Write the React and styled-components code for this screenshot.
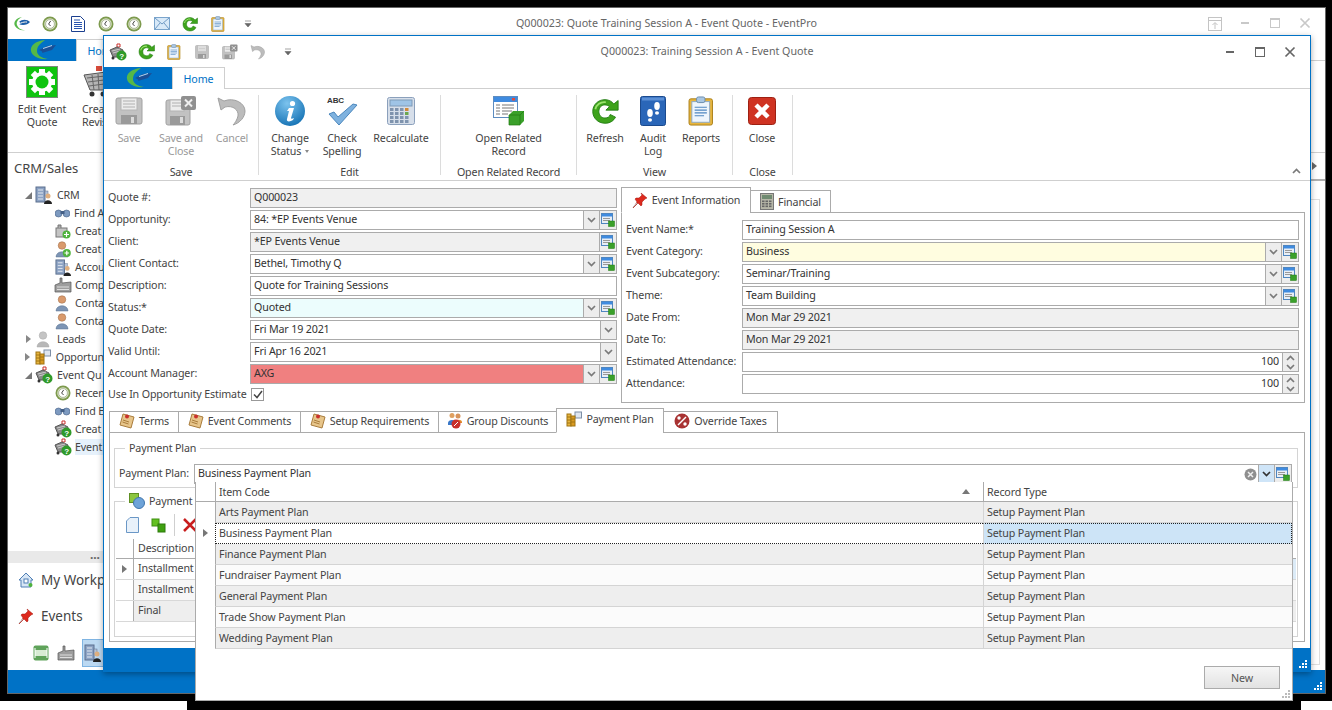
import React from "react";
import styled, { createGlobalStyle } from "styled-components";

const FONT = `"Noto Sans", "Open Sans", "Liberation Sans", sans-serif`;
const BLUE = "#0072c6";

const Global = createGlobalStyle`
  html, body { margin: 0; padding: 0; background: #fff; overflow: hidden; }
  body { font-family: ${FONT}; font-size: 10.7px; letter-spacing: -0.15px; color: #444; }
  * { box-sizing: border-box; }
`;

const Desktop = styled.div`
  position: relative;
  width: 1332px;
  height: 710px;
  overflow: hidden;
  background:
    linear-gradient(#000, #000) 0 0 / 100% 701px no-repeat,
    linear-gradient(#000, #000) 187px 701px / 1114px 9px no-repeat,
    #fff;
`;

const Ico = styled.svg`
  display: block;
  flex-shrink: 0;
`;

/* ---------- icons ---------- */
const Logo = () => (
  <Ico width="40" height="22" viewBox="0 0 40 22">
    <path d="M23 1C13 2 8 7 9 12c1 5 8 9 17 8-7-1-11-4-11-8 0-5 4-8 8-11z" fill="#55b848" />
    <path d="M17 11l8-4 9-1-4 5-10 3c1-1 0-2-3-3z" fill="#1a4f96" />
    <path d="M21 9.500l9-3" stroke="#b4d6f0" strokeWidth="1" />
  </Ico>
);
const SmallLogo = () => (
  <Ico width="18" height="16" viewBox="0 0 18 16">
    <path d="M9 1C3 2 0 6 2 10c2 3 6 5 10 4-4 0-7-2-8-5-1-3 1-6 5-8z" fill="#55b848" />
    <path d="M6 6c3-3 8-3 11 0-2 3-8 4-11 2 2 0 3-1 0-2z" fill="#1c5fa8" />
    <path d="M8 7c2-1 4-1 6-1" stroke="#fff" strokeWidth="1" />
  </Ico>
);
const Clock = ({ s = 16 }) => (
  <Ico width={s} height={s} viewBox="0 0 16 16">
    <circle cx="8" cy="8" r="7.5" fill="#7d9a4d" />
    <circle cx="8" cy="8" r="5.8" fill="#d6dfc3" />
    <circle cx="8" cy="8" r="4.4" fill="#fff" stroke="#8b9a72" strokeWidth=".6" />
    <path d="M8.6 5L6.6 8l2 2" fill="none" stroke="#444" strokeWidth="1" />
  </Ico>
);
const DocLines = () => (
  <Ico width="14" height="16" viewBox="0 0 14 16">
    <path d="M.5.5h9l4 4v11H.5z" fill="#fff" stroke="#1b3f8f" />
    <path d="M3 4h6M3 6.5h8M3 8.500h8M3 10.500h8M3 12.500h8" stroke="#2a55b0" />
  </Ico>
);
const Mail = () => (
  <Ico width="16" height="13" viewBox="0 0 16 13">
    <rect x=".5" y=".5" width="15" height="12" fill="#d8e9f8" stroke="#7aa4cc" />
    <path d="M1 1l7 6 7-6M1 12l5-6M15 12l-5-6" fill="none" stroke="#6f9ac4" />
  </Ico>
);
const Refresh = ({ s = 16 }) => (
  <Ico width={s} height={s} viewBox="0 0 32 32">
    <path
      d="M16 3C8 3 2 9 2 16.500S8 30 16 30c6 0 10-3 12-7l-6-3c-1 3-3 4-6 4-4 0-7-3-7-7.500S12 9 16 9c2 0 4 1 5 2l-4 4h14V4l-5 4c-2-3-6-5-10-5z"
      fill="#3ea31c"
      stroke="#1f7a10"
      strokeWidth="1"
    />
    <path d="M5 14C6 9 11 5 17 6" stroke="#9be36e" strokeWidth="2" fill="none" />
  </Ico>
);
const Clipboard = ({ s = 16 }) => (
  <Ico width={s * 0.85} height={s} viewBox="0 0 27 32">
    <rect x="1" y="3" width="25" height="28" rx="2" fill="#e7b53e" stroke="#a87d16" />
    <rect x="4" y="6" width="19" height="22" fill="#eef5fc" stroke="#8aa8c8" />
    <path d="M7 12h13M7 15h13M7 18h13M7 21h10" stroke="#4f86c0" strokeWidth="1.200" />
    <rect x="9" y="1" width="9" height="6" rx="2" fill="#a9c6e2" stroke="#6a8cad" />
  </Ico>
);
const Floppy = ({ s = 32 }) => (
  <Ico width={s} height={s} viewBox="0 0 32 32">
    <rect x="3" y="3" width="26" height="26" rx="2" fill="#c2c2c2" stroke="#a2a2a2" />
    <rect x="8" y="3" width="16" height="12" fill="#ececec" stroke="#b4b4b4" />
    <path d="M10 6h12M10 9h12M10 12h12" stroke="#b0b0b0" />
    <rect x="8" y="20" width="16" height="9" fill="#9a9a9a" />
    <rect x="18" y="22" width="3" height="6" fill="#dcdcdc" />
  </Ico>
);
const FloppyX = ({ s = 32 }) => (
  <Ico width={s} height={s} viewBox="0 0 32 32">
    <rect x="1" y="5" width="24" height="25" rx="2" fill="#c2c2c2" stroke="#a2a2a2" />
    <rect x="5" y="5" width="14" height="11" fill="#ececec" stroke="#b4b4b4" />
    <path d="M7 8h10M7 11h10" stroke="#b0b0b0" />
    <rect x="5" y="21" width="15" height="9" fill="#9a9a9a" />
    <rect x="15" y="22" width="3" height="6" fill="#dcdcdc" />
    <rect x="16" y="1" width="15" height="14" rx="2" fill="#909090" />
    <path d="M20 4.500l7 7M27 4.500l-7 7" stroke="#eee" strokeWidth="2" />
  </Ico>
);
const Undo = ({ s = 32 }) => (
  <Ico width={s} height={s} viewBox="0 0 32 32">
    <path
      d="M2 3l3 12 4-3c8-2 14 3 13 9-1 4-3 7-5 9 7-2 12-8 12-14C29 8 18 2 8 6z"
      fill="#bcbcbc"
      stroke="#a0a0a0"
    />
  </Ico>
);
const Info = () => (
  <Ico width="32" height="32" viewBox="0 0 32 32">
    <defs>
      <radialGradient id="ig" cx=".4" cy=".25" r=".85">
        <stop offset="0" stopColor="#7cc3ee" />
        <stop offset="1" stopColor="#0d6cb0" />
      </radialGradient>
    </defs>
    <circle cx="16" cy="16" r="15" fill="url(#ig)" />
    <circle cx="18.500" cy="8.500" r="2.600" fill="#fff" />
    <path d="M15 13h5l-3 10c0 1 1 1 3 0l-1 2c-3 2-7 2-6-1l2-8h-2z" fill="#fff" />
  </Ico>
);
const SpellText = styled.text`
  font: bold 8px "Liberation Sans", sans-serif;
  fill: #333;
`;
const Spell = () => (
  <Ico width="32" height="32" viewBox="0 0 32 32">
    <SpellText x="1" y="8">ABC</SpellText>
    <path d="M3 19l5-2 4 5L27 9l4 1-18 20z" fill="#7fb2df" stroke="#4b87bd" />
  </Ico>
);
const Calc = ({ s = 32 }) => (
  <Ico width={s} height={s} viewBox="0 0 28 28">
    <rect x=".5" y=".5" width="27" height="27" rx="2" fill="#d7dfea" stroke="#8ba0bc" />
    <rect x="3" y="3" width="22" height="6" fill="#9fc4e6" stroke="#7f9bb8" />
    {[11, 15, 19, 23].map((y) =>
      [3, 8, 13, 18].map((x) => (
        <rect key={x + "-" + y} x={x} y={y} width="3.500" height="3" fill={x === 18 ? (y === 11 ? "#d08a3c" : y === 15 ? "#6aa84f" : "#8095b0") : "#7f93ad"} />
      ))
    )}
  </Ico>
);
const GreyCalc = () => (
  <Ico width="14" height="17" viewBox="0 0 14 17">
    <rect x=".5" y=".5" width="13" height="16" fill="#b7b7a8" stroke="#777" />
    <rect x="2" y="2" width="10" height="4" fill="#6f8a70" />
    {[7.500, 10, 12.500].map((y) =>
      [2, 5.500, 9].map((x) => <rect key={x + "-" + y} x={x} y={y} width="2.500" height="1.600" fill="#666" />)
    )}
  </Ico>
);
const Related = () => (
  <Ico width="32" height="30" viewBox="0 0 32 30">
    <rect x=".5" y=".5" width="24" height="21" fill="#fff" stroke="#5d8cc0" />
    <rect x="1" y="1" width="23" height="5" fill="#3f8be0" />
    <rect x="19" y="2" width="3" height="2.500" fill="#e24a3b" />
    <path d="M3 9h4M9 9h12M3 12h4M9 12h12M3 15h4M9 15h10M3 18h4M9 18h6" stroke="#777" />
    <path d="M16 19l4-4h11v10l-4 4H16z" fill="#3aa02a" />
    <path d="M16 19h11v10H16zM27 19l4-4" fill="none" stroke="#1f7a10" strokeWidth=".7" />
  </Ico>
);
const Feet = () => (
  <Ico width="26" height="30" viewBox="0 0 26 30">
    <rect x=".5" y=".5" width="25" height="29" rx="2" fill="#2a66b8" stroke="#1b4a8e" />
    <rect x="2" y="1.500" width="22" height="3" fill="#5c90d6" />
    <ellipse cx="10" cy="17" rx="2.800" ry="4" fill="#fff" />
    <ellipse cx="10" cy="24" rx="2" ry="1.800" fill="#fff" />
    <ellipse cx="17" cy="10" rx="2.800" ry="4" fill="#fff" />
    <ellipse cx="17" cy="17" rx="2" ry="1.800" fill="#fff" />
  </Ico>
);
const RedClose = () => (
  <Ico width="28" height="28" viewBox="0 0 28 28">
    <rect x=".5" y=".5" width="27" height="27" rx="3" fill="#cf3322" stroke="#9d2012" />
    <path d="M8 8l12 12M20 8L8 20" stroke="#fff" strokeWidth="4.500" />
  </Ico>
);
const Pin = ({ s = 16 }) => (
  <Ico width={s} height={s} viewBox="0 0 16 16">
    <path d="M9 1l6 5-2 1-3 3 0 3-1 1-3-3-5 5 4-6-2-3 1-1 3 0 3-3z" fill="#dd2a1e" stroke="#a5140c" strokeWidth=".5" />
    <path d="M5 11l-4 4" stroke="#bbb" strokeWidth="1" />
  </Ico>
);
const Lookup = () => (
  <Ico width="14" height="14" viewBox="0 0 14 14">
    <rect x=".5" y=".5" width="11" height="10" fill="#e8eef6" stroke="#4f86c0" />
    <rect x="1" y="1" width="10" height="2.500" fill="#3f8be0" />
    <path d="M2 5.500h7M2 7.500h7" stroke="#999" />
    <rect x="7.500" y="8" width="6" height="5.500" fill="#3aa02a" stroke="#1f7a10" strokeWidth=".5" />
  </Ico>
);
const Note = () => (
  <Ico width="16" height="16" viewBox="0 0 16 16">
    <path d="M4 1l11 3-3 11-11-3z" fill="#e7c58a" stroke="#a97c3c" />
    <path d="M4 7l6 2M3.500 9l6 2" stroke="#a97c3c" />
    <circle cx="8" cy="3.500" r="2" fill="#c9302c" />
  </Ico>
);
const People = () => (
  <Ico width="16" height="17" viewBox="0 0 16 17">
    <circle cx="5" cy="3.500" r="2.500" fill="#e0a060" />
    <path d="M1 11c0-4 8-4 8 0v2H1z" fill="#3a78c8" />
    <circle cx="11" cy="4" r="2.500" fill="#d8935a" />
    <path d="M8 10c0-3 7-3 7 0v1H8z" fill="#e2892b" />
    <circle cx="9" cy="12" r="4.500" fill="#c9302c" />
    <path d="M7 14l4-4" stroke="#fff" />
  </Ico>
);
const Coins = ({ s = 16 }) => (
  <Ico width={s} height={s} viewBox="0 0 16 16">
    <rect x="9" y="1" width="6.500" height="6" fill="#dfe6ef" stroke="#7d8ea5" />
    <rect x="1" y="3" width="4" height="12" fill="#e7b53e" stroke="#a07512" />
    <rect x="5" y="5" width="4" height="10" fill="#d99a22" stroke="#a07512" />
    <path d="M1 6h4M1 9h4M1 12h4M5 8h4M5 11h4" stroke="#a07512" />
  </Ico>
);
const Percent = () => (
  <Ico width="16" height="16" viewBox="0 0 16 16">
    <circle cx="8" cy="8" r="7.500" fill="#a83232" />
    <path d="M4 12l8-8" stroke="#fff" strokeWidth="1.500" />
    <circle cx="5" cy="5" r="1.700" fill="#fff" />
    <circle cx="11" cy="11" r="1.700" fill="#fff" />
  </Ico>
);
const QuestionMark = styled.text`
  font: bold 8px "Liberation Sans", sans-serif;
  fill: #fff;
`;
const EventQuote = () => (
  <Ico width="18" height="18" viewBox="0 0 18 18">
    <path d="M8 1h3v3H8z" fill="none" stroke="#c9302c" />
    <path d="M1 7l7-3 6 3-2 7H4z" fill="#8a8a8a" stroke="#555" />
    <path d="M3 8l8-2M4 10l7-2" stroke="#ccc" />
    <circle cx="4" cy="15" r="1.500" fill="#333" />
    <circle cx="12.500" cy="12.500" r="5" fill="#2f9a2a" />
    <QuestionMark x="10.300" y="15.500">?</QuestionMark>
  </Ico>
);
const Cart = () => (
  <Ico width="34" height="34" viewBox="0 0 34 34">
    <path d="M2 10l22-3-2 18H8z" fill="#b5b5b5" stroke="#555" />
    <path d="M5 13l18-2M6 17l16-2M7 21l15-2M10 10l2 15M16 9l1 16" stroke="#666" />
    <circle cx="10" cy="29" r="2.500" fill="#333" />
    <circle cx="21" cy="29" r="2.500" fill="#333" />
    <rect x="14" y="1" width="6" height="5" fill="#d84a3a" />
  </Ico>
);
const GreenGear = () => (
  <Ico width="32" height="32" viewBox="0 0 32 32">
    <rect x=".5" y=".5" width="31" height="31" fill="#0fc40f" stroke="#7a8a7a" />
    {[0, 45, 90, 135].map((a) => (
      <rect key={a} x="13" y="3" width="6" height="26" fill="#fff" transform={`rotate(${a} 16 16)`} />
    ))}
    <circle cx="16" cy="16" r="10" fill="#fff" />
    <circle cx="16" cy="16" r="6.500" fill="#0fc40f" />
  </Ico>
);
const Binoculars = () => (
  <Ico width="15" height="10" viewBox="0 0 15 10">
    <circle cx="3.500" cy="5.500" r="3.500" fill="#7d9ac0" stroke="#445f85" strokeWidth=".6" />
    <circle cx="11.500" cy="5.500" r="3.500" fill="#7d9ac0" stroke="#445f85" strokeWidth=".6" />
    <rect x="5.500" y="3" width="4" height="3" fill="#445f85" />
  </Ico>
);
const Building = ({ s = 18 }) => (
  <Ico width={s} height={s} viewBox="0 0 18 18">
    <rect x="1" y="1" width="9" height="15" fill="#8da3c4" stroke="#5b6f8e" />
    <path d="M3 4h5M3 7h5M3 10h5M3 13h5" stroke="#e2e8f0" />
    <rect x="10" y="5" width="3" height="5" fill="#b4c2d8" stroke="#5b6f8e" strokeWidth=".5" />
    <circle cx="13" cy="10" r="2.500" fill="#e0b080" />
    <path d="M9 18c0-5 8-5 8 0z" fill="#222" />
  </Ico>
);
const CreateCompany = () => (
  <Ico width="16" height="16" viewBox="0 0 16 16">
    <rect x="1" y="5" width="11" height="9" fill="#c4c4c4" stroke="#777" />
    <path d="M3 5V2h3v3" fill="#aaa" stroke="#777" />
    <circle cx="11.500" cy="11.500" r="4" fill="#4fb33c" />
    <path d="M9 11.500h5M11.500 9v5" stroke="#fff" strokeWidth="1.200" />
  </Ico>
);
const Person = ({ plus, grey }) => (
  <Ico width="16" height="17" viewBox="0 0 16 17">
    <circle cx="7" cy="4.500" r="3.800" fill={grey ? "#c4c4c4" : "#d99a6c"} stroke={grey ? "#aaa" : "#9c6a44"} strokeWidth=".5" />
    <path d="M1 16c0-7 12-7 12 0z" fill={grey ? "#b8b8b8" : "#7d95b5"} stroke={grey ? "#aaa" : "#5a7291"} strokeWidth=".5" />
    {plus && <circle cx="11.800" cy="12" r="4" fill="#4fb33c" />}
    {plus && <path d="M9.500 12h4.600M11.800 9.700v4.600" stroke="#fff" strokeWidth="1.200" />}
  </Ico>
);
const Factory = () => (
  <Ico width="18" height="16" viewBox="0 0 18 16">
    <path d="M1 15V8l5-2V1h2v5l9-1v10z" fill="#9d9d9d" stroke="#555" strokeWidth=".7" />
    <path d="M3 10h12M3 12.500h12" stroke="#ddd" />
  </Ico>
);
const House = () => (
  <Ico width="16" height="16" viewBox="0 0 16 16">
    <path d="M8 1L1 8h2v7h10V8h2z" fill="#d8e6f5" stroke="#4f7fb5" />
    <rect x="6" y="7" width="4" height="4" fill="#fff" stroke="#4f7fb5" />
    <circle cx="12.500" cy="13" r="2" fill="#4fb33c" />
  </Ico>
);
const Bed = () => (
  <Ico width="16" height="16" viewBox="0 0 16 16">
    <rect x=".5" y=".5" width="15" height="15" rx="2" fill="#5fa35a" />
    <rect x="2" y="5" width="12" height="6" fill="#d8ecd4" />
    <path d="M2 3v10M14 3v10" stroke="#fff" />
  </Ico>
);
const PlanShapes = () => (
  <Ico width="16" height="16" viewBox="0 0 16 16">
    <rect x=".5" y=".5" width="9" height="9" fill="#8cc63f" stroke="#5f8f22" />
    <circle cx="10" cy="10" r="5.500" fill="#6ea3d8" stroke="#3f75ad" />
  </Ico>
);
const NewPage = () => (
  <Ico width="13" height="16" viewBox="0 0 13 16">
    <path d="M4 .5h8.500v15H.5V4z" fill="#e8f1fa" stroke="#6a97c6" />
  </Ico>
);
const GreenCubes = () => (
  <Ico width="15" height="15" viewBox="0 0 15 15">
    <rect x="1" y="1" width="7" height="7" fill="#63c020" stroke="#3f8f10" />
    <rect x="7" y="6" width="7" height="8" fill="#3fa010" stroke="#2d7a0a" />
  </Ico>
);
const RedX = () => (
  <Ico width="14" height="14" viewBox="0 0 14 14">
    <path d="M1 1l12 12M13 1L1 13" stroke="#c81e1e" strokeWidth="2.500" />
  </Ico>
);
const Chevron = ({ dark, up }) => (
  <Ico width="9" height="6" viewBox="0 0 9 6">
    <path d={up ? "M1 5l3.500-3.500L8 5" : "M1 1l3.500 3.500L8 1"} fill="none" stroke={dark ? "#333" : "#7a7a7a"} strokeWidth="1.700" />
  </Ico>
);
const Grip = () => (
  <Ico width="10" height="10" viewBox="0 0 10 10">
    <path d="M7 1h2v2H7zM4 4h2v2H4zM7 4h2v2H7zM1 7h2v2H1zM4 7h2v2H4zM7 7h2v2H7z" fill="#fff" />
  </Ico>
);
const GreyGrip = () => (
  <Ico width="10" height="10" viewBox="0 0 10 10">
    <path d="M7 1h2v2H7zM4 4h2v2H4zM7 4h2v2H7zM1 7h2v2H1zM4 7h2v2H4zM7 7h2v2H7z" fill="#bbb" />
  </Ico>
);
const ClearCircle = () => (
  <Ico width="13" height="13" viewBox="0 0 13 13">
    <circle cx="6.500" cy="6.500" r="6" fill="#8f8f8f" />
    <path d="M4 4l5 5M9 4l-5 5" stroke="#eee" strokeWidth="1.500" />
  </Ico>
);
const QatMore = () => (
  <Ico width="8" height="8" viewBox="0 0 8 8">
    <path d="M1 1h6M1 3.500h6l-3 3.500z" fill="#666" stroke="#666" strokeWidth=".6" />
  </Ico>
);
const MinIco = ({ c }) => (
  <Ico width="12" height="12" viewBox="0 0 12 12">
    <rect x="2" y="5" width="8" height="2" fill={c} />
  </Ico>
);
const MaxIco = ({ c }) => (
  <Ico width="12" height="12" viewBox="0 0 12 12">
    <rect x="1.500" y="1.500" width="9" height="9" fill="none" stroke={c} />
    <rect x="1" y="1" width="10" height="2" fill={c} />
  </Ico>
);
const CloseIco = ({ c }) => (
  <Ico width="12" height="12" viewBox="0 0 12 12">
    <path d="M1.500 1.500l9 9M10.500 1.500l-9 9" stroke={c} strokeWidth="1.700" />
  </Ico>
);
const RestoreIco = () => (
  <Ico width="14" height="14" viewBox="0 0 14 14">
    <rect x=".5" y=".5" width="13" height="13" fill="none" stroke="#c4c4c4" />
    <path d="M1 3.500h12M7 12V6M4.500 8L7 5.500 9.500 8" fill="none" stroke="#c4c4c4" />
  </Ico>
);
const Triangle = ({ c = "#666" }) => (
  <Ico width="5" height="8" viewBox="0 0 5 8">
    <path d="M0 0l5 4-5 4z" fill={c} />
  </Ico>
);
const OpenTriangle = () => (
  <Ico width="7" height="7" viewBox="0 0 7 7">
    <path d="M7 0v7H0z" fill="#777" />
  </Ico>
);

/* ---------- windows ---------- */
const MainWindow = styled.div`
  position: absolute;
  left: 7px;
  top: 7px;
  width: 1319px;
  height: 687px;
  display: flex;
  flex-direction: column;
  background: #fff;
  border: 1px solid #666;
`;

const DialogWindow = styled.div`
  position: absolute;
  left: 103px;
  top: 35px;
  width: 1208px;
  height: 637px;
  display: flex;
  flex-direction: column;
  background: #fff;
  border: 1px solid ${BLUE};
  box-shadow: 0 2px 6px rgba(0, 0, 0, 0.35);
`;

const TitleBar = styled.div`
  height: 31px;
  flex-shrink: 0;
  display: grid;
  grid-template-columns: 1fr auto 1fr;
  align-items: center;
`;

const Qat = styled.div`
  display: flex;
  align-items: center;
`;

const QatSlot = styled.div`
  width: 28px;
  display: flex;
  justify-content: center;
`;

const QatEnd = styled.div`
  margin-left: 12px;
`;

const Title = styled.div`
  margin-top: -2px;
  letter-spacing: 0;
  color: #666;
  white-space: nowrap;
`;

const WinControls = styled.div`
  display: flex;
  justify-content: flex-end;
  padding-right: 5px;
`;

const WinBtn = styled.div`
  width: 30px;
  display: flex;
  justify-content: center;
`;

const TabStrip = styled.div`
  height: 22px;
  flex-shrink: 0;
  display: flex;
  border-bottom: 1px solid #cfcfcf;
`;

const AppButton = styled.div`
  width: 68px;
  height: 22px;
  background: ${BLUE};
  display: flex;
  align-items: center;
  justify-content: center;
`;

const HomeTab = styled.div`
  width: 53px;
  height: 22px;
  background: #fff;
  border: 1px solid #cfcfcf;
  border-bottom: none;
  color: ${BLUE};
  display: flex;
  align-items: center;
  justify-content: center;
`;

const Ribbon = styled.div`
  height: 92px;
  flex-shrink: 0;
  display: flex;
  position: relative;
  border-bottom: 1px solid #cfcfcf;
`;

const RibbonGroup = styled.div`
  width: ${(p) => p.$w}px;
  margin-top: 6px;
  height: 80px;
  display: flex;
  flex-direction: column;
  border-right: 1px solid #dcdcdc;
`;

const GroupItems = styled.div`
  flex: 1;
  display: flex;
  padding-left: ${(p) => p.$pad || 0}px;
  padding-top: ${(p) => p.$top || 0}px;
`;

const GroupLabel = styled.div`
  height: 14px;
  margin-bottom: -4px;
  line-height: 14px;
  text-align: center;
  white-space: nowrap;
`;

const BigButton = styled.div`
  width: ${(p) => p.$w}px;
  display: flex;
  flex-direction: column;
  align-items: ${(p) => (p.$left ? "flex-start" : "center")};
  color: ${(p) => (p.$off ? "#9a9a9a" : "#444")};
`;

const BigIcon = styled.div`
  height: 32px;
  display: flex;
  align-items: center;
  justify-content: center;
`;

const BigLabel = styled.div`
  margin-top: 5px;
  line-height: 13px;
  text-align: ${(p) => (p.$left ? "left" : "center")};
  white-space: nowrap;
`;

const Collapse = styled.div`
  position: absolute;
  right: 9px;
  bottom: 6px;
`;

const DropMark = styled.span`
  display: inline-block;
  margin-left: 4px;
  vertical-align: 2px;
  border: 2px solid transparent;
  border-top: 3px solid #888;
  border-bottom: none;
`;

/* ---------- main window side ---------- */
const MainBody = styled.div`
  flex: 1;
  min-height: 0;
  display: flex;
`;

const Sidebar = styled.div`
  width: 96px;
  flex-shrink: 0;
  display: flex;
  flex-direction: column;
`;

const SidebarTitle = styled.div`
  padding: 5px 0 0 6px;
  height: 33px;
  font-size: 13px;
  letter-spacing: 0;
  line-height: 20px;
  color: #444;
`;

const Tree = styled.div`
  flex: 1;
`;

const TreeRow = styled.div`
  height: 18px;
  display: flex;
  align-items: center;
  gap: ${(p) => (p.$child ? 4 : 5)}px;
  padding-left: ${(p) => (p.$child ? 47 : 14)}px;
  white-space: nowrap;
`;

const TreeArrow = styled.div`
  width: 12px;
  margin-right: -3px;
  display: flex;
  justify-content: center;
`;

const TreeIcon = styled.div`
  width: 16px;
  display: flex;
  justify-content: center;
`;

const TreeLabel = styled.span`
  flex: 1;
  padding: 1px 0;
  background: ${(p) => (p.$active ? "#e6f1fb" : "transparent")};
`;

const Splitter = styled.div`
  height: 12px;
  flex-shrink: 0;
  background: #e9e9e9;
  padding-left: 82px;
  font-size: 12px;
  line-height: 7px;
  font-weight: bold;
  color: #666;
`;

const NavItem = styled.div`
  height: 36px;
  padding: 0 0 2px 10px;
  display: flex;
  align-items: center;
  gap: 7px;
  font-size: 13.500px;
  letter-spacing: 0;
  color: #444;
  white-space: nowrap;
`;

const NavIcons = styled.div`
  height: 35px;
  display: flex;
  align-items: center;
  padding-left: 20px;
`;

const NavIconBtn = styled.div`
  width: ${(p) => (p.$on ? 23 : 26)}px;
  height: 28px;
  margin-left: ${(p) => (p.$on ? 3 : 0)}px;
  display: flex;
  align-items: center;
  justify-content: center;
  background: ${(p) => (p.$on ? "#bcd9f2" : "transparent")};
  border: 1px solid ${(p) => (p.$on ? "#7fb4e2" : "transparent")};
`;

const ContentPane = styled.div`
  flex: 1;
  display: flex;
  flex-direction: column;
`;

const PaneHeader = styled.div`
  height: 28px;
  display: flex;
  align-items: center;
  justify-content: flex-end;
  padding-right: 8px;
  border-bottom: 2px solid #b0b0b0;
`;

const PaneFrame = styled.div`
  flex: 1;
  margin: 18px 5px 5px 0;
  border: 1px solid #dedede;
`;

const StatusBar = styled.div`
  height: 23px;
  margin-top: auto;
  flex-shrink: 0;
  background: ${BLUE};
  display: flex;
  justify-content: flex-end;
  align-items: flex-end;
  padding: 0 2px 2px 0;
`;

/* ---------- dialog form ---------- */
const FormArea = styled.div`
  height: 222px;
  flex-shrink: 0;
  display: flex;
  gap: 4px;
`;

const LeftForm = styled.div`
  width: 513px;
  padding: 7px 0 0 4px;
  display: flex;
  flex-direction: column;
  gap: 2px;
`;

const FormRow = styled.div`
  display: grid;
  grid-template-columns: ${(p) => p.$label}px 1fr;
  align-items: center;
  height: 20px;
  white-space: nowrap;
`;

const FormLabel = styled.span`
  margin-top: -2px;
`;

const Field = styled.div`
  height: 20px;
  display: flex;
  align-items: stretch;
  border: 1px solid #ababab;
  background: ${(p) => p.$bg || "#fff"};
  color: #333;
`;

const FieldText = styled.div`
  flex: 1;
  padding: 0 3px;
  line-height: 17px;
  text-align: ${(p) => (p.$right ? "right" : "left")};
  overflow: hidden;
  white-space: nowrap;
`;

const SideBtn = styled.div`
  width: ${(p) => p.$w || 16}px;
  background: ${(p) => (p.$on ? "#cfe5f8" : "#ededed")};
  border-left: 1px solid #ababab;
  display: flex;
  align-items: center;
  justify-content: center;
`;

const ClearSlot = styled.div`
  width: 16px;
  display: flex;
  align-items: center;
  justify-content: center;
`;

const Spinner = styled.div`
  width: 16px;
  border-left: 1px solid #ababab;
  background: #ededed;
  display: flex;
  flex-direction: column;
  align-items: center;
  justify-content: center;
  gap: 3px;
`;

const Check = styled.div`
  width: 13px;
  height: 13px;
  margin-left: 1px;
  border: 1px solid #999;
  background: #fff;
  display: flex;
  align-items: center;
  justify-content: center;
`;

const RightForm = styled.div`
  width: 684px;
  padding-top: 6px;
  display: flex;
  flex-direction: column;
`;

const TabRow = styled.div`
  display: flex;
  align-items: flex-end;
  height: 26px;
  margin-bottom: -1px;
  position: relative;
  z-index: 1;
`;

const Tab = styled.div`
  width: ${(p) => p.$w}px;
  height: ${(p) => (p.$on ? p.$h + 3 : p.$h)}px;
  padding-bottom: ${(p) => p.$pb || 0}px;
  display: flex;
  align-items: center;
  justify-content: center;
  gap: 4px;
  background: #fff;
  border: 1px solid #ababab;
  border-bottom: ${(p) => (p.$on ? "1px solid #fff" : "1px solid #ababab")};
  margin-left: -1px;
  white-space: nowrap;
  &:first-child { margin-left: 0; }
`;

const TabPanel = styled.div`
  flex: 1;
  border: 1px solid #ababab;
  padding: 7px 5px 0 4px;
  display: flex;
  flex-direction: column;
  gap: 2px;
`;

/* ---------- bottom tabs ---------- */
const BottomArea = styled.div`
  margin: 4px 5px 0 5px;
  height: 235px;
  flex-shrink: 0;
  display: flex;
  flex-direction: column;
`;

const BottomPanel = styled.div`
  flex: 1;
  border: 1px solid #ababab;
  padding: 7px 6px 0 4px;
  background: #fff;
`;

const Group = styled.fieldset`
  margin: 0 0 ${(p) => p.$mb || 0}px;
  padding: ${(p) => p.$pt}px 5px 5px 4px;
  min-width: 0;
  border: 1px solid #d4d4d4;
  height: ${(p) => p.$h}px;
`;

const Legend = styled.legend`
  margin-left: 6px;
  padding: 0 4px;
  height: 16px;
  line-height: 15px;
  display: flex;
  align-items: center;
  gap: 4px;
  color: #444;
`;

const Toolbar = styled.div`
  display: flex;
  align-items: center;
  height: 22px;
  margin-top: 3px;
`;

const ToolSlot = styled.div`
  width: 26px;
  display: flex;
  justify-content: center;
`;

const ToolSep = styled.div`
  width: 1px;
  height: 22px;
  margin: 0 8px 0 3px;
  background: #cfcfcf;
`;

const BackGrid = styled.div`
  margin: 3px -4px 0 -3px;
`;

const BackRow = styled.div`
  display: grid;
  grid-template-columns: 17px 1fr 12px;
  align-items: center;
  height: ${(p) => p.$h}px;
  border-bottom: 1px solid ${(p) => (p.$head ? "#ababab" : "#d8d8d8")};
  background: ${(p) => p.$bg || "transparent"};
`;

const BackIndicator = styled.div`
  height: 100%;
  display: flex;
  align-items: center;
  justify-content: center;
  background: #fff;
`;

const BackCell = styled.div`
  height: 100%;
  padding-left: 4px;
  line-height: 18px;
  border-left: 1px solid #ababab;
`;

const RowEnd = styled.div`
  height: 100%;
  display: flex;
  align-items: center;
  background: ${(p) => p.$bg || "transparent"};
`;

const RowDot = styled.div`
  width: 5px;
  height: 10px;
  border-radius: 50%;
  background: #5b62b0;
`;

/* ---------- lookup popup ---------- */
const Popup = styled.div`
  position: absolute;
  left: 195px;
  top: 482px;
  width: 1098px;
  height: 219px;
  display: flex;
  flex-direction: column;
  background: #fff;
  border: 1px solid #ababab;
  border-top: none;
`;

const PopupRow = styled.div`
  display: grid;
  grid-template-columns: 19px 768px 1fr;
  height: 21px;
  flex-shrink: 0;
  color: #444;
`;

const PopupHead = styled(PopupRow)`
  height: 20px;
`;

const Indicator = styled.div`
  display: flex;
  align-items: center;
  justify-content: center;
  border-bottom: 1px solid ${(p) => (p.$head ? "#ababab" : "transparent")};
`;

const PopupCell = styled.div`
  display: flex;
  align-items: center;
  justify-content: space-between;
  padding: 0 13px ${(p) => (p.$head ? 0 : 1)}px 3px;
  border-left: 1px ${(p) => (p.$focus === "left" ? "dotted #222" : p.$strong ? "solid #ababab" : "solid #d4d4d4")};
  border-right: ${(p) => (p.$focus === "right" ? "1px dotted #222" : "none")};
  border-bottom: 1px ${(p) => (p.$focus ? "dotted #222" : p.$head ? "solid #ababab" : "solid #d4d4d4")};
  border-top: ${(p) => (p.$focus ? "1px dotted #222" : "none")};
  background: ${(p) => p.$bg};
  white-space: nowrap;
`;

const SortUp = styled.span`
  width: 0;
  height: 0;
  border: 4px solid transparent;
  border-bottom: 5px solid #777;
  border-top: none;
`;

const PopupFooter = styled.div`
  flex: 1;
  display: flex;
  justify-content: flex-end;
  align-items: flex-end;
  padding: 0 12px 11px 0;
  position: relative;
`;

const NewButton = styled.button`
  width: 76px;
  height: 23px;
  padding: 0;
  font: inherit;
  letter-spacing: inherit;
  color: #555;
  background: linear-gradient(#f6f6f6, #e2e2e2);
  border: 1px solid #ababab;
`;

const CornerGrip = styled.div`
  position: absolute;
  right: 1px;
  bottom: 1px;
`;

const PAYMENT_PLANS = [
  "Arts Payment Plan",
  "Business Payment Plan",
  "Finance Payment Plan",
  "Fundraiser Payment Plan",
  "General Payment Plan",
  "Trade Show Payment Plan",
  "Wedding Payment Plan",
];

const treeRows = [
  { label: "CRM", arrow: "open", icon: <Building /> },
  { label: "Find A", child: true, icon: <Binoculars /> },
  { label: "Creat", child: true, icon: <CreateCompany /> },
  { label: "Creat", child: true, icon: <Person plus /> },
  { label: "Accou", child: true, icon: <Building s={17} /> },
  { label: "Comp", child: true, icon: <Factory /> },
  { label: "Conta", child: true, icon: <Person /> },
  { label: "Conta", child: true, icon: <Person /> },
  { label: "Leads", arrow: "closed", icon: <Person grey /> },
  { label: "Opportun", arrow: "closed", icon: <Coins /> },
  { label: "Event Qu", arrow: "open", icon: <EventQuote /> },
  { label: "Recen", child: true, icon: <Clock s={16} /> },
  { label: "Find E", child: true, icon: <Binoculars /> },
  { label: "Creat", child: true, icon: <EventQuote /> },
  { label: "Event", child: true, icon: <EventQuote />, active: true },
];

const Lk = () => (
  <SideBtn $w={17}>
    <Lookup />
  </SideBtn>
);
const Dd = () => (
  <SideBtn>
    <Chevron />
  </SideBtn>
);

const leftRows = [
  { label: "Quote #:", value: "Q000023", bg: "#f0f0f0" },
  { label: "Opportunity:", value: "84: *EP Events Venue", dd: true, lk: true },
  { label: "Client:", value: "*EP Events Venue", bg: "#f0f0f0", lk: true },
  { label: "Client Contact:", value: "Bethel, Timothy Q", dd: true, lk: true },
  { label: "Description:", value: "Quote for Training Sessions" },
  { label: "Status:*", value: "Quoted", bg: "#ecfdfd", dd: true, lk: true },
  { label: "Quote Date:", value: "Fri Mar 19 2021", dd: true },
  { label: "Valid Until:", value: "Fri Apr 16 2021", dd: true },
  { label: "Account Manager:", value: "AXG", bg: "#f08080", dd: true, lk: true },
];

const rightRows = [
  { label: "Event Name:*", value: "Training Session A" },
  { label: "Event Category:", value: "Business", bg: "#fffde0", dd: true, lk: true },
  { label: "Event Subcategory:", value: "Seminar/Training", dd: true, lk: true },
  { label: "Theme:", value: "Team Building", dd: true, lk: true },
  { label: "Date From:", value: "Mon Mar 29 2021", bg: "#f0f0f0" },
  { label: "Date To:", value: "Mon Mar 29 2021", bg: "#f0f0f0" },
  { label: "Estimated Attendance:", value: "100", spin: true },
  { label: "Attendance:", value: "100", spin: true },
];

const bottomTabs = [
  { label: "Terms", w: 70, icon: <Note /> },
  { label: "Event Comments", w: 123, icon: <Note /> },
  { label: "Setup Requirements", w: 139, icon: <Note /> },
  { label: "Group Discounts", w: 119, icon: <People /> },
  { label: "Payment Plan", w: 108, icon: <Coins />, on: true },
  { label: "Override Taxes", w: 115, icon: <Percent /> },
];

const FormField = ({ row, labelWidth }) => (
  <FormRow $label={labelWidth}>
    <FormLabel>{row.label}</FormLabel>
    <Field $bg={row.bg}>
      <FieldText $right={row.spin}>{row.value}</FieldText>
      {row.dd && <Dd />}
      {row.lk && <Lk />}
      {row.spin && (
        <Spinner>
          <Chevron up />
          <Chevron />
        </Spinner>
      )}
    </Field>
  </FormRow>
);

const App = () => {
  return (
    <Desktop>
      <Global />
      <MainWindow>
        <TitleBar>
          <Qat>
            <QatSlot><SmallLogo /></QatSlot>
            <QatSlot><Clock /></QatSlot>
            <QatSlot><DocLines /></QatSlot>
            <QatSlot><Clock /></QatSlot>
            <QatSlot><Clock /></QatSlot>
            <QatSlot><Mail /></QatSlot>
            <QatSlot><Refresh /></QatSlot>
            <QatSlot><Clipboard /></QatSlot>
            <QatEnd><QatMore /></QatEnd>
          </Qat>
          <Title>Q000023: Quote Training Session A - Event Quote - EventPro</Title>
          <WinControls>
            <WinBtn><RestoreIco /></WinBtn>
            <WinBtn><MinIco c="#c8c8c8" /></WinBtn>
            <WinBtn><MaxIco c="#c8c8c8" /></WinBtn>
            <WinBtn><CloseIco c="#c8c8c8" /></WinBtn>
          </WinControls>
        </TitleBar>
        <TabStrip>
          <AppButton><Logo /></AppButton>
          <HomeTab>Home</HomeTab>
        </TabStrip>
        <Ribbon>
          <GroupItems $top={5}>
            <BigButton $w={68}>
              <BigIcon><GreenGear /></BigIcon>
              <BigLabel>Edit Event<br />Quote</BigLabel>
            </BigButton>
            <GroupItems $pad={6}>
              <BigButton $w={36} $left>
                <BigIcon><Cart /></BigIcon>
                <BigLabel $left>Crea<br />Revis</BigLabel>
              </BigButton>
            </GroupItems>
          </GroupItems>
        </Ribbon>
        <MainBody>
          <Sidebar>
            <SidebarTitle>CRM/Sales</SidebarTitle>
            <Tree>
              {treeRows.map((row, i) => (
                <TreeRow key={i} $child={row.child}>
                  {!row.child && (
                    <TreeArrow>
                      {row.arrow === "open" ? <OpenTriangle /> : <Triangle c="#888" />}
                    </TreeArrow>
                  )}
                  <TreeIcon>{row.icon}</TreeIcon>
                  <TreeLabel $active={row.active}>{row.label}</TreeLabel>
                </TreeRow>
              ))}
            </Tree>
            <Splitter>...</Splitter>
            <NavItem><House />My Workp</NavItem>
            <NavItem><Pin />Events</NavItem>
            <NavIcons>
              <NavIconBtn><Bed /></NavIconBtn>
              <NavIconBtn><Factory /></NavIconBtn>
              <NavIconBtn $on><Building /></NavIconBtn>
            </NavIcons>
          </Sidebar>
          <ContentPane>
            <PaneHeader><Triangle /></PaneHeader>
            <PaneFrame />
          </ContentPane>
        </MainBody>
        <StatusBar><Grip /></StatusBar>
      </MainWindow>

      <DialogWindow>
        <TitleBar>
          <Qat>
            <QatSlot><EventQuote /></QatSlot>
            <QatSlot><Refresh s={17} /></QatSlot>
            <QatSlot><Clipboard /></QatSlot>
            <QatSlot><Floppy s={16} /></QatSlot>
            <QatSlot><FloppyX s={16} /></QatSlot>
            <QatSlot><Undo s={16} /></QatSlot>
            <QatEnd><QatMore /></QatEnd>
          </Qat>
          <Title>Q000023: Training Session A - Event Quote</Title>
          <WinControls>
            <WinBtn><MinIco c="#666" /></WinBtn>
            <WinBtn><MaxIco c="#666" /></WinBtn>
            <WinBtn><CloseIco c="#666" /></WinBtn>
          </WinControls>
        </TitleBar>
        <TabStrip>
          <AppButton><Logo /></AppButton>
          <HomeTab>Home</HomeTab>
        </TabStrip>
        <Ribbon>
          <RibbonGroup $w={155}>
            <GroupItems>
              <BigButton $w={50} $off>
                <BigIcon><Floppy /></BigIcon>
                <BigLabel>Save</BigLabel>
              </BigButton>
              <BigButton $w={54} $off>
                <BigIcon><FloppyX /></BigIcon>
                <BigLabel>Save and<br />Close</BigLabel>
              </BigButton>
              <BigButton $w={48} $off>
                <BigIcon><Undo /></BigIcon>
                <BigLabel>Cancel</BigLabel>
              </BigButton>
            </GroupItems>
            <GroupLabel>Save</GroupLabel>
          </RibbonGroup>
          <RibbonGroup $w={182}>
            <GroupItems $pad={2}>
              <BigButton $w={58}>
                <BigIcon><Info /></BigIcon>
                <BigLabel>Change<br />Status<DropMark /></BigLabel>
              </BigButton>
              <BigButton $w={46}>
                <BigIcon><Spell /></BigIcon>
                <BigLabel>Check<br />Spelling</BigLabel>
              </BigButton>
              <BigButton $w={72}>
                <BigIcon><Calc s={28} /></BigIcon>
                <BigLabel>Recalculate</BigLabel>
              </BigButton>
            </GroupItems>
            <GroupLabel>Edit</GroupLabel>
          </RibbonGroup>
          <RibbonGroup $w={136}>
            <GroupItems>
              <BigButton $w={135}>
                <BigIcon><Related /></BigIcon>
                <BigLabel>Open Related<br />Record</BigLabel>
              </BigButton>
            </GroupItems>
            <GroupLabel>Open Related Record</GroupLabel>
          </RibbonGroup>
          <RibbonGroup $w={156}>
            <GroupItems $pad={1}>
              <BigButton $w={54}>
                <BigIcon><Refresh s={28} /></BigIcon>
                <BigLabel>Refresh</BigLabel>
              </BigButton>
              <BigButton $w={42}>
                <BigIcon><Feet /></BigIcon>
                <BigLabel>Audit<br />Log</BigLabel>
              </BigButton>
              <BigButton $w={54}>
                <BigIcon><Clipboard s={30} /></BigIcon>
                <BigLabel>Reports</BigLabel>
              </BigButton>
            </GroupItems>
            <GroupLabel>View</GroupLabel>
          </RibbonGroup>
          <RibbonGroup $w={60}>
            <GroupItems>
              <BigButton $w={58}>
                <BigIcon><RedClose /></BigIcon>
                <BigLabel>Close</BigLabel>
              </BigButton>
            </GroupItems>
            <GroupLabel>Close</GroupLabel>
          </RibbonGroup>
          <Collapse><Chevron up /></Collapse>
        </Ribbon>

        <FormArea>
          <LeftForm>
            {leftRows.map((row) => (
              <FormField key={row.label} row={row} labelWidth={142} />
            ))}
            <FormRow $label={142}>
              <FormLabel>Use In Opportunity Estimate</FormLabel>
              <Check>
                <Ico width="10" height="9" viewBox="0 0 10 9">
                  <path d="M1 4.500l3 3 5-6.500" fill="none" stroke="#444" strokeWidth="1.500" />
                </Ico>
              </Check>
            </FormRow>
          </LeftForm>
          <RightForm>
            <TabRow>
              <Tab $w={130} $h={23} $on><Pin />Event Information</Tab>
              <Tab $w={81} $h={23}><GreyCalc />Financial</Tab>
            </TabRow>
            <TabPanel>
              {rightRows.map((row) => (
                <FormField key={row.label} row={row} labelWidth={116} />
              ))}
            </TabPanel>
          </RightForm>
        </FormArea>

        <BottomArea>
          <TabRow>
            {bottomTabs.map((tab) => (
              <Tab key={tab.label} $w={tab.w} $h={22} $pb={3} $on={tab.on}>
                {tab.icon}
                {tab.label}
              </Tab>
            ))}
          </TabRow>
          <BottomPanel>
            <Group $mb={5} $h={48} $pt={8}>
              <Legend>Payment Plan</Legend>
              <FormRow $label={75}>
                <FormLabel>Payment Plan:</FormLabel>
                <Field>
                  <FieldText>Business Payment Plan</FieldText>
                  <ClearSlot><ClearCircle /></ClearSlot>
                  <SideBtn $on><Chevron dark /></SideBtn>
                  <Lk />
                </Field>
              </FormRow>
            </Group>
            <Group $h={144} $pt={2}>
              <Legend><PlanShapes />Payment P</Legend>
              <Toolbar>
                <ToolSlot><NewPage /></ToolSlot>
                <ToolSlot><GreenCubes /></ToolSlot>
                <ToolSep />
                <RedX />
              </Toolbar>
              <BackGrid>
                <BackRow $h={20} $head>
                  <BackIndicator />
                  <BackCell>Description</BackCell>
                  <span />
                </BackRow>
                <BackRow $h={21} $bg="#ffffff">
                  <BackIndicator><Triangle c="#777" /></BackIndicator>
                  <BackCell>Installment</BackCell>
                  <RowEnd $bg="#dcebf7"><RowDot /></RowEnd>
                </BackRow>
                <BackRow $h={21} $bg="#f7f7f7">
                  <BackIndicator />
                  <BackCell>Installment</BackCell>
                  <RowEnd><RowDot /></RowEnd>
                </BackRow>
                <BackRow $h={21} $bg="#eeeeee">
                  <BackIndicator />
                  <BackCell>Final</BackCell>
                  <RowEnd><RowDot /></RowEnd>
                </BackRow>
              </BackGrid>
            </Group>
          </BottomPanel>
        </BottomArea>
        <StatusBar><Grip /></StatusBar>
      </DialogWindow>

      <Popup>
        <PopupHead>
          <Indicator $head />
          <PopupCell $head $strong $bg="#fff">Item Code<SortUp /></PopupCell>
          <PopupCell $head $strong $bg="#fff">Record Type</PopupCell>
        </PopupHead>
        {PAYMENT_PLANS.map((plan, i) => {
          const selected = i === 1;
          const bg = i % 2 === 0 ? "#eeeeee" : "#fbfbfb";
          return (
            <PopupRow key={plan}>
              <Indicator>{selected && <Triangle c="#777" />}</Indicator>
              <PopupCell $strong $focus={selected ? "left" : undefined} $bg={selected ? "#fff" : bg}>{plan}</PopupCell>
              <PopupCell $focus={selected ? "right" : undefined} $bg={selected ? "#cde4f7" : bg}>Setup Payment Plan</PopupCell>
            </PopupRow>
          );
        })}
        <PopupFooter>
          <NewButton>New</NewButton>
          <CornerGrip><GreyGrip /></CornerGrip>
        </PopupFooter>
      </Popup>
    </Desktop>
  );
};

export default App;
